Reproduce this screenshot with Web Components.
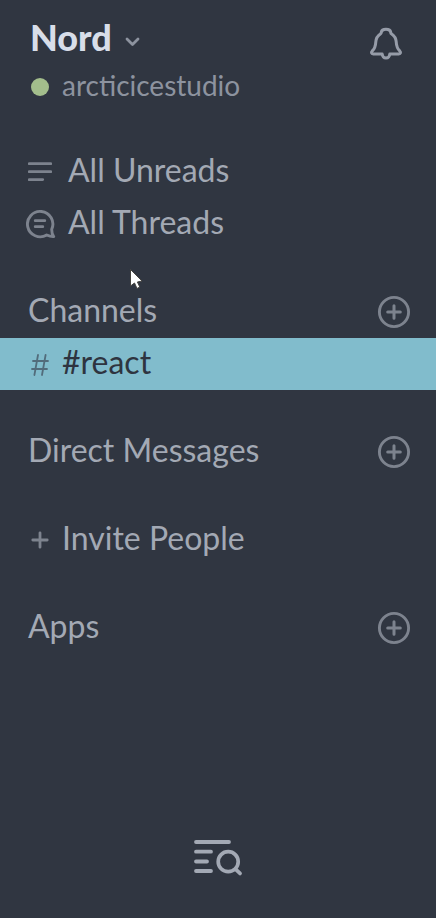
<!DOCTYPE html>
<html lang="en">
<head>
<meta charset="utf-8">
<title>Nord</title>
<style>
html, body { margin: 0; height: 100%; background: #303641; }
body { overflow: hidden; font-family: Lato, "Liberation Sans", sans-serif; }
</style>
</head>
<body>
<nord-sidebar></nord-sidebar>
<script>
const icons = {
  chevron: [15, 10, '<path d="M2 2l5.5 5.5L13 2" stroke-width="2.8"/>'],
  bell: [34, 34, '<path d="M11.8 27H4.2C2.3 27 1.9 25.2 3.2 24C6.3 21.3 6.6 18.5 6.8 14.8C7 10.5 9.4 8.2 11.6 6.7C12.2 6.3 12.2 5.8 12.3 5.2C12.6 3.3 14.3 2.3 17 2.3S21.4 3.3 21.7 5.2C21.8 5.8 21.8 6.3 22.4 6.7C24.6 8.2 27 10.5 27.2 14.8C27.4 18.5 27.7 21.3 30.8 24C32.1 25.2 31.7 27 29.8 27H22.2M11.8 27H13.2C13.4 29.5 15 31.1 17 31.1S20.6 29.5 20.8 27H22.2" stroke-width="3"/>'],
  lines: [24, 20, '<path d="M1.3 1.6H22.7M1.3 9.6H22.7M1.3 17.6H14.7" stroke-width="2.9"/>'],
  thread: [30, 30, '<path d="M20.7 26A12.7 12.7 0 1 1 25.7 20.4C25.7 23 26.2 25.5 27.7 27.5C25.2 27.7 23 27 20.7 26Z" stroke-width="2.9"/><path d="M9.2 11.7H18.8M9.2 17.7H16.8" stroke-width="2.8"/>'],
  hash: [18, 22, '<path d="M7 1L3.4 21M14.6 1L11 21M2 7H17M1 15H16" stroke-width="1.8"/>'],
  plus: [18, 18, '<path d="M9 1.8V16.2M1.8 9H16.2" stroke-width="2.8"/>'],
  add: [34, 34, '<circle cx="17" cy="17" r="14.6" stroke-width="2.9"/><path d="M17 10.7V23.3M10.7 17H23.3" stroke-width="3"/>'],
  search: [50, 38, '<path d="M3 3H36M3 12.7H18M3 22.5H14M3 32H18" stroke-width="3.8"/><circle cx="35.2" cy="22.7" r="10" stroke-width="3.7"/><path d="M42.5 30.2L47 34.4" stroke-width="3.8"/>']
};

class NordIcon extends HTMLElement {
  connectedCallback() {
    const [w, h, art] = icons[this.getAttribute('name')];
    this.attachShadow({ mode: 'open' }).innerHTML = `
      <style>:host{display:block;flex:none;width:${w}px;height:${h}px}svg{display:block}</style>
      <svg width="${w}" height="${h}" viewBox="0 0 ${w} ${h}" fill="none" stroke="currentColor" stroke-linecap="round" stroke-linejoin="round">${art}</svg>`;
  }
}
customElements.define('nord-icon', NordIcon);

function component(name, markup) {
  const template = document.createElement('template');
  template.innerHTML = markup;
  customElements.define(name, class extends HTMLElement {
    constructor() {
      super();
      this.attachShadow({ mode: 'open' }).append(template.content.cloneNode(true));
    }
  });
}

component('team-header', `
<style>
:host { display: flex; justify-content: space-between; height: 146px; box-sizing: border-box; padding: 15px 33px 0 30px; }
.team { display: flex; align-items: center; gap: 13px; height: 44px; font: 900 36px/44px Lato, sans-serif; color: #d8dee9; }
.team nord-icon { color: #8d939f; margin-top: 10px; }
.user { display: flex; align-items: center; gap: 13px; height: 36px; margin-top: 10px; margin-left: 1px; font-size: 28px; line-height: 36px; color: #8d939f; }
.user span { margin-top: -5px; }
.presence { width: 18px; height: 18px; border-radius: 50%; background: #a3be8c; }
.bell { color: #969ca8; margin: 12px 0 0; }
</style>
<div>
  <div class="team"><slot name="team"></slot><nord-icon name="chevron"></nord-icon></div>
  <div class="user"><i class="presence"></i><span><slot name="user"></slot></span></div>
</div>
<nord-icon class="bell" name="bell"></nord-icon>`);

component('nav-row', `
<style>
:host { display: flex; align-items: center; height: 52px; box-sizing: border-box; padding: 0 25px 0 28px; font-size: 32px; line-height: 48px; color: #a3a9b4; --icon: #7d838e; }
:host([gap]) { margin-top: 36px; }
:host([active]) { background: #81bccc; color: #2e3440; --icon: #526c7b; }
::slotted(nord-icon) { color: var(--icon); }
span { flex: 1; padding-bottom: 4px; white-space: nowrap; }
</style>
<slot name="icon"></slot><span><slot></slot></span><slot name="action"></slot>`);

component('nord-sidebar', `
<style>
:host { display: flex; flex-direction: column; position: relative; height: 918px; background: #303641; }
.lines { margin: 0 16px 0 0; }
.thread { margin: 0 12px 0 -2px; }
.hash { margin: 1px 13px 0 3px; }
.plus { margin: 0 13px 1px 3px; }
footer { display: flex; justify-content: center; margin-top: auto; padding-bottom: 41px; color: #a3a9b4; }
.cursor { position: absolute; left: 128px; top: 267px; }
</style>
<team-header><span slot="team">Nord</span><span slot="user">arcticicestudio</span></team-header>
<nav-row><nord-icon slot="icon" class="lines" name="lines"></nord-icon>All Unreads</nav-row>
<nav-row><nord-icon slot="icon" class="thread" name="thread"></nord-icon>All Threads</nav-row>
<nav-row gap>Channels<nord-icon slot="action" name="add"></nord-icon></nav-row>
<nav-row active><nord-icon slot="icon" class="hash" name="hash"></nord-icon>#react</nav-row>
<nav-row gap>Direct Messages<nord-icon slot="action" name="add"></nord-icon></nav-row>
<nav-row gap><nord-icon slot="icon" class="plus" name="plus"></nord-icon>Invite People</nav-row>
<nav-row gap>Apps<nord-icon slot="action" name="add"></nord-icon></nav-row>
<footer><nord-icon name="search"></nord-icon></footer>
<svg class="cursor" width="18" height="24" viewBox="0 0 18 24"><path d="M2.5 2.5V19L6.5 16L9 21.5L11.8 20L9.4 15L14 14Z" fill="#fff" stroke="#44433f" stroke-width="1"/></svg>`);
</script>
</body>
</html>
